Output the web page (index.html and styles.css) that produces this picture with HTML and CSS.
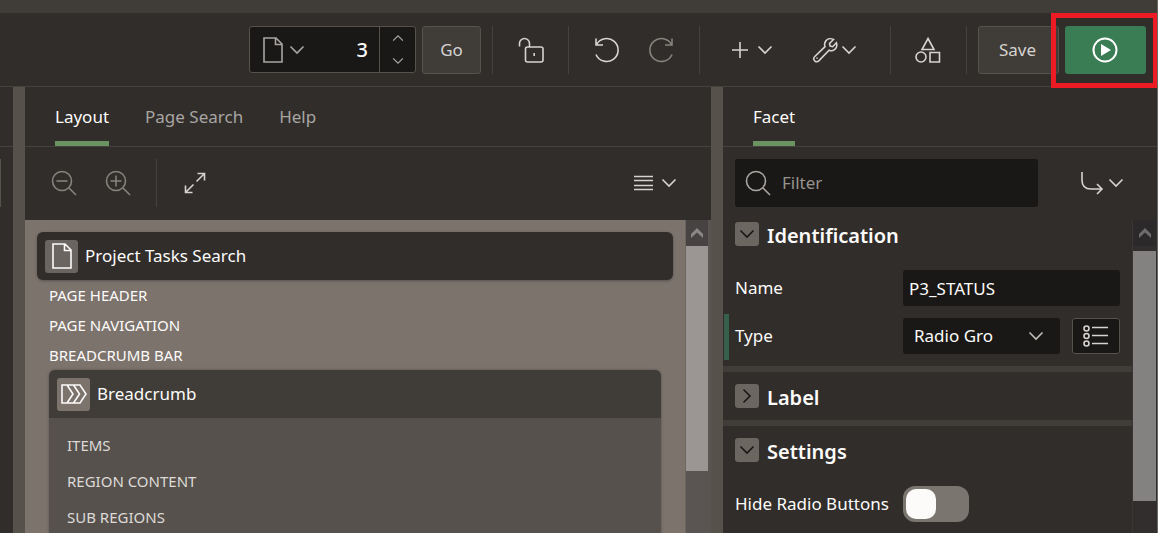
FILE: index.html
```html
<!DOCTYPE html>
<html lang="en">
<head>
    <meta charset="UTF-8">
    <title>Page Designer</title>
    <link rel="stylesheet" href="styles.css">
</head>
<body>
    <!-- shared icons -->
    <svg class="sprite" aria-hidden="true">
        <symbol id="chevron" viewBox="0 0 16 16"><path d="M1.5 4.5 8 11l6.5-6.5"/></symbol>
        <symbol id="page" viewBox="0 0 20 26"><path d="M1 1h12l6 6v18H1zM12.5 1v6.5H19"/></symbol>
        <symbol id="search" viewBox="0 0 26 26"><circle cx="11" cy="11" r="9.5"/><path d="m18 18 7 7"/></symbol>
        <symbol id="arrow-up" viewBox="0 0 12 10"><path d="M6 0 12 6v4L6 4.5 0 10V6z"/></symbol>
    </svg>

    <div class="strip"></div>

    <div class="toolbar">
        <div class="page_select">
            <button class="page_menu" aria-label="Page finder">
                <svg class="icon_page"><use href="#page"/></svg>
                <svg class="chevron"><use href="#chevron"/></svg>
            </button>
            <input type="text" class="page_number" value="3" aria-label="Page number">
            <div class="stepper">
                <button aria-label="Next page"><svg class="chevron_small up"><use href="#chevron"/></svg></button>
                <button aria-label="Previous page"><svg class="chevron_small"><use href="#chevron"/></svg></button>
            </div>
        </div>
        <button class="btn btn_go">Go</button>
        <span class="divider"></span>
        <button class="icon_btn lock" aria-label="Page unlocked">
            <svg width="26" height="26" viewBox="0 0 26 26"><path d="M1.5 9.500V6.500a5 5 0 0 1 10 0V10M9.500 10H23a2 2 0 0 1 2 2v11a2 2 0 0 1-2 2H9.500a2 2 0 0 1-2-2V12a2 2 0 0 1 2-2zM16.200 16v3"/></svg>
        </button>
        <span class="divider"></span>
        <div class="btn_pair">
            <button class="icon_btn" aria-label="Undo">
                <svg width="26" height="26" viewBox="0 0 26 26"><path d="M2 1.500V8h7M2.500 7.500A11.500 11.500 0 1 1 2 17.500"/></svg>
            </button>
            <button class="icon_btn dim" aria-label="Redo">
                <svg width="26" height="26" viewBox="0 0 26 26"><path d="M24 1.500V8h-7M23.500 7.500A11.500 11.500 0 1 0 24 17.500"/></svg>
            </button>
        </div>
        <span class="divider"></span>
        <div class="btn_pair">
            <button class="icon_btn menu" aria-label="Create">
                <svg width="18" height="16" viewBox="0 0 18 16"><path d="M9 0v16M1 8h16"/></svg>
                <svg class="chevron"><use href="#chevron"/></svg>
            </button>
            <button class="icon_btn menu utilities" aria-label="Utilities">
                <svg width="26" height="26" viewBox="0 0 26 26"><path d="M21.500 2.500 17.500 6.500l.6 2.600 2.600.6 3.700-3.900c1.200 3.400-.4 6.700-3.600 7.700-1.300.4-2.600.3-3.700-.2L7 23.600c-1.200 1.200-3.100 1.300-4.300.2-1.200-1.200-1.100-3.100.1-4.300L13 9.700c-.6-1.600-.5-3.700.6-5.400 1.700-2.700 5-3.300 7.900-1.800z"/><path d="M5 20.500v1.200"/></svg>
                <svg class="chevron"><use href="#chevron"/></svg>
            </button>
        </div>
        <span class="divider"></span>
        <button class="icon_btn shapes" aria-label="Shared components">
            <svg width="26" height="26" viewBox="0 0 26 26"><path d="M13 1.500 19 12.500H7zM15 15.500h9.500V25H15z"/><circle cx="6" cy="20" r="5"/></svg>
        </button>
        <span class="divider"></span>
        <button class="btn btn_save">Save</button>
        <div class="run_box">
            <button class="btn btn_run" aria-label="Save and run page">
                <svg width="26" height="26" viewBox="0 0 26 26"><circle cx="13" cy="13" r="11.500"/><path class="solid" d="M9 7v12l10-6z"/></svg>
            </button>
        </div>
    </div>

    <div class="main">
        <div class="side">
            <div class="tabs"></div>
            <div class="side_tools"></div>
        </div>
        <div class="splitter"></div>

        <div class="panel">
            <div class="tabs">
                <a href="#" class="tab active">Layout</a>
                <a href="#" class="tab">Page Search</a>
                <a href="#" class="tab">Help</a>
            </div>
            <div class="panel_tools">
                <button class="icon_btn dim" aria-label="Zoom out">
                    <svg width="26" height="26" viewBox="0 0 26 26"><use href="#search"/><path d="M5.500 11h11"/></svg>
                </button>
                <button class="icon_btn dim" aria-label="Zoom in">
                    <svg width="26" height="26" viewBox="0 0 26 26"><use href="#search"/><path d="M5.500 11h11M11 5.500v11"/></svg>
                </button>
                <span class="divider"></span>
                <button class="icon_btn expand" aria-label="Expand">
                    <svg width="22" height="22" viewBox="0 0 22 22"><path d="M12.500 9.500 20.500 1.500M13.500 1.500h7v7M9.500 12.500l-8 8M1.500 13.500v7h7"/></svg>
                </button>
                <button class="icon_btn menu view_menu" aria-label="View">
                    <svg width="19" height="16" viewBox="0 0 19 16"><path d="M0 1.500h19M0 5.500h19M0 10.500h19M0 14.500h19"/></svg>
                    <svg class="chevron"><use href="#chevron"/></svg>
                </button>
            </div>
            <div class="scroll_area canvas">
                <div class="canvas_content">
                    <div class="page_card">
                        <span class="card_icon"><svg class="icon_page"><use href="#page"/></svg></span>
                        Project Tasks Search
                    </div>
                    <ul class="slots">
                        <li>PAGE HEADER</li>
                        <li>PAGE NAVIGATION</li>
                        <li>BREADCRUMB BAR</li>
                    </ul>
                    <div class="region">
                        <div class="region_head">
                            <span class="card_icon">
                                <svg width="26" height="20" viewBox="0 0 26 20"><path d="M1 1h18l6 9-6 9H1zM6 1l6 9-6 9M12.500 1l6 9-6 9"/></svg>
                            </span>
                            Breadcrumb
                        </div>
                        <ul class="region_slots">
                            <li>ITEMS</li>
                            <li>REGION CONTENT</li>
                            <li>SUB REGIONS</li>
                        </ul>
                    </div>
                </div>
                <div class="scrollbar">
                    <div class="scroll_up"><svg><use href="#arrow-up"/></svg></div>
                    <div class="thumb"></div>
                </div>
            </div>
        </div>
        <div class="splitter"></div>

        <div class="panel">
            <div class="tabs">
                <a href="#" class="tab active">Facet</a>
            </div>
            <div class="panel_tools">
                <label class="filter">
                    <svg width="26" height="26" viewBox="0 0 26 26"><use href="#search"/></svg>
                    <input type="text" placeholder="Filter" aria-label="Filter">
                </label>
                <button class="icon_btn menu goto_menu" aria-label="Go to group">
                    <svg width="24" height="24" viewBox="0 0 24 24"><path d="M2 1v8q0 9 9 9h11M17 13l5 5-5 5"/></svg>
                    <svg class="chevron"><use href="#chevron"/></svg>
                </button>
            </div>
            <div class="scroll_area">
                <div class="props">
                    <div class="group">
                        <div class="group_head">
                            <button class="toggle" aria-label="Collapse"><svg class="chevron"><use href="#chevron"/></svg></button>
                            <h3>Identification</h3>
                        </div>
                        <div class="field">
                            <label for="name">Name</label>
                            <input type="text" id="name" value="P3_STATUS">
                        </div>
                        <div class="field changed">
                            <label for="type">Type</label>
                            <div class="select_box">
                                <select id="type">
                                    <option>Radio Gro</option>
                                </select>
                                <svg class="chevron"><use href="#chevron"/></svg>
                            </div>
                            <button class="lov" aria-label="Pick type">
                                <svg width="26" height="22" viewBox="0 0 26 22"><path d="M9 2.500h16M9 10.500h16M9 18.500h16"/><circle cx="3.500" cy="3.500" r="2.500"/><circle cx="3.500" cy="11" r="2.500"/><circle cx="3.500" cy="18.500" r="2.500"/></svg>
                            </button>
                        </div>
                    </div>
                    <div class="group">
                        <div class="group_head">
                            <button class="toggle" aria-label="Expand"><svg class="chevron right"><use href="#chevron"/></svg></button>
                            <h3>Label</h3>
                        </div>
                    </div>
                    <div class="group">
                        <div class="group_head">
                            <button class="toggle" aria-label="Collapse"><svg class="chevron"><use href="#chevron"/></svg></button>
                            <h3>Settings</h3>
                        </div>
                        <div class="field">
                            <label for="hide">Hide Radio Buttons</label>
                            <input type="checkbox" id="hide" class="switch">
                        </div>
                    </div>
                </div>
                <div class="scrollbar dark">
                    <div class="scroll_up"><svg><use href="#arrow-up"/></svg></div>
                    <div class="thumb"></div>
                </div>
            </div>
        </div>
    </div>
</body>
</html>
```
FILE: styles.css
```css
* {
    margin: 0;
    padding: 0;
    box-sizing: border-box;
}

body {
    display: flex;
    flex-direction: column;
    height: 100vh;
    overflow: hidden;
    border-right: 1px solid #6b6864;
    background-color: #312d2a;
    color: #fcfbfa;
    font: 17px/24px "Noto Sans", "Open Sans", sans-serif;
}

button, input, select {
    border: none;
    background: none;
    color: inherit;
    font: inherit;
}

ul {
    list-style: none;
}

a {
    color: inherit;
    text-decoration: none;
}

svg {
    flex: none;
    fill: none;
    stroke: currentColor;
    stroke-width: 1.6;
}

.solid {
    fill: currentColor;
    stroke: none;
}

.sprite {
    position: absolute;
    width: 0;
    height: 0;
}

.chevron {
    width: 16px;
    height: 16px;
}

.chevron.right {
    transform: rotate(-90deg);
}

.chevron_small {
    width: 12px;
    height: 12px;
}

.up {
    transform: rotate(180deg);
}

.icon_page {
    width: 20px;
    height: 26px;
}

/* top bar */
.strip {
    flex: none;
    height: 13px;
    background-color: #403c38;
}

.toolbar {
    display: flex;
    flex: none;
    align-items: center;
    justify-content: flex-end;
    height: 74px;
    padding-right: 11px;
    border-bottom: 1px solid #45413c;
}

.divider {
    width: 1px;
    height: 48px;
    background-color: #45413c;
}

.page_select {
    display: flex;
    width: 167px;
    height: 47px;
    margin-right: 6px;
    border: 1px solid #56514b;
    border-radius: 3px;
    background-color: #1a1816;
}

.page_menu {
    display: flex;
    align-items: center;
    gap: 6px;
    padding-left: 13px;
    color: #a8a5a2;
}

.page_number {
    flex: 1;
    min-width: 0;
    padding-right: 11px;
    font-size: 20px;
    font-weight: 500;
    text-align: right;
}

.stepper {
    display: flex;
    flex-direction: column;
    width: 36px;
    border-left: 1px solid #56514b;
    color: #a8a5a2;
}

.stepper button {
    display: flex;
    flex: 1;
    align-items: center;
    justify-content: center;
}

.btn {
    height: 48px;
    border: 1px solid #56514b;
    border-radius: 3px;
    background-color: #403c38;
    color: #d6d3d1;
}

.btn_go {
    width: 59px;
    margin-right: 11px;
}

.btn_save {
    width: 81px;
    margin: 0 6px 0 11px;
    padding-right: 2px;
}

.btn_run {
    display: flex;
    align-items: center;
    justify-content: center;
    width: 81px;
    padding-right: 2px;
    border: none;
    background-color: #3a7d55;
    color: #fff;
}

.btn_run svg {
    stroke-width: 2;
}

.run_box {
    position: relative;
}

/* highlight frame around the run button */
.run_box::after {
    content: "";
    position: absolute;
    inset: -13px -12px -14px -14px;
    border: 5px solid #ed1c24;
    pointer-events: none;
}

.icon_btn {
    display: flex;
    align-items: center;
    justify-content: center;
    width: 54px;
    height: 48px;
    color: #d6d3d1;
}

.icon_btn.dim {
    color: #86827e;
}

.lock, .shapes {
    width: 75px;
}

.shapes {
    padding-right: 2px;
}

.btn_pair {
    display: flex;
    padding: 0 11px;
}

.icon_btn.menu {
    gap: 8px;
    width: 82px;
}

.icon_btn.utilities {
    gap: 3px;
    width: 86px;
    padding-right: 4px;
}

/* panels */
.main {
    display: grid;
    flex: 1;
    grid-template-columns: 13px 12px 686fr 12px 434fr;
    min-height: 0;
}

.splitter {
    background-color: #56514b;
}

.side_tools {
    height: 48px;
    margin-top: 12px;
    border-left: 1px solid #56514b;
}

.panel {
    display: flex;
    flex-direction: column;
    min-width: 0;
    min-height: 0;
}

.tabs {
    display: flex;
    flex: none;
    gap: 36px;
    height: 60px;
    padding-left: 30px;
    border-bottom: 1px solid #45413c;
}

.tab {
    padding-top: 18px;
    border-bottom: 5px solid transparent;
    color: #a8a5a2;
}

.tab.active {
    border-color: #6b9362;
    color: #fcfbfa;
}

.panel_tools {
    display: flex;
    flex: none;
    align-items: center;
    height: 73px;
    padding: 0 12px 1px;
}

.panel_tools .divider {
    margin: 0 11px;
}

.panel_tools .view_menu {
    margin-left: auto;
    margin-right: 3px;
}

.filter {
    display: flex;
    flex: 1;
    align-items: center;
    gap: 11px;
    min-width: 0;
    height: 48px;
    padding-left: 10px;
    border-radius: 3px;
    background-color: #1a1816;
    color: #a8a5a2;
}

.filter input {
    flex: 1;
    min-width: 0;
}

.filter input::placeholder {
    color: #96938f;
}

.panel_tools .goto_menu {
    gap: 4px;
    margin-left: 25px;
    padding-right: 4px;
}

.scroll_area {
    display: flex;
    flex: 1;
    min-height: 0;
}

.scrollbar {
    display: flex;
    flex: none;
    flex-direction: column;
    width: 26px;
    padding-right: 3px;
    border-left: 1px solid #6b6560;
    background-color: #5a5552;
}

.scroll_up {
    display: flex;
    flex: none;
    align-items: center;
    justify-content: center;
    height: 26px;
    background-color: #464342;
    color: #8a8785;
}

.scroll_up svg {
    width: 12px;
    height: 10px;
    fill: currentColor;
    stroke: none;
}

.thumb {
    flex: none;
    height: 72%;
    background-color: #9b9693;
}

.scrollbar.dark {
    gap: 5px;
    width: 25px;
    padding-right: 1px;
    border-color: #3a3635;
    background-color: #322e2d;
}

.dark .scroll_up {
    background-color: #2b2929;
    color: #6e6c6c;
}

.dark .thumb {
    height: 80%;
    background-color: #848181;
}

/* layout canvas */
.canvas {
    background-color: #7c736d;
}

.canvas_content {
    display: flex;
    flex: 1;
    flex-direction: column;
    min-width: 0;
    padding: 12px 12px 0;
    overflow: hidden;
}

.page_card, .region_head {
    display: flex;
    flex: none;
    align-items: center;
    gap: 7px;
    height: 48px;
    padding-left: 8px;
}

.page_card {
    border-radius: 6px;
    background-color: #312d2a;
    box-shadow: 0 1px 3px rgba(0, 0, 0, .3);
}

.card_icon {
    display: flex;
    align-items: center;
    justify-content: center;
    width: 33px;
    height: 33px;
    border-radius: 3px;
    background-color: #6b6561;
}

.region_head .card_icon {
    background-color: #7c736d;
}

.slots, .region_slots {
    font-size: 15px;
}

.slots li {
    padding: 3px 12px;
}

.region {
    flex: 1;
    min-height: 0;
    margin: 0 12px;
    border-radius: 6px 6px 0 0;
    background-color: #56514c;
    box-shadow: 0 0 3px rgba(0, 0, 0, .3);
}

.region_head {
    border-radius: 6px 6px 0 0;
    background-color: #403c37;
}

.region_slots {
    padding: 9px 18px 0;
    color: #dddad8;
    line-height: 36px;
}

/* properties */
.props {
    flex: 1;
    min-width: 0;
    overflow: hidden;
}

.group {
    padding: 12px;
    border-bottom: 6px solid #403c38;
}

.group:first-child {
    padding-top: 2px;
}

.group:last-child {
    border-bottom: none;
    padding-bottom: 0;
}

.group_head {
    display: flex;
    align-items: center;
    gap: 8px;
    height: 24px;
}

.group_head h3 {
    padding-top: 3px;
    font-size: 20px;
    font-weight: 600;
}

.toggle {
    display: flex;
    align-items: center;
    justify-content: center;
    width: 24px;
    height: 24px;
    border-radius: 3px;
    background-color: #6b6660;
    color: #1a1816;
}

.field {
    display: flex;
    align-items: center;
    gap: 12px;
    margin-top: 12px;
}

.group_head + .field {
    margin-top: 24px;
}

.field label {
    flex: none;
    width: 156px;
    white-space: nowrap;
}

.field input[type="text"], .select_box {
    flex: 1;
    min-width: 0;
    height: 36px;
    border-radius: 3px;
    background-color: #1a1816;
}

.field input[type="text"] {
    padding-left: 6px;
}

/* modified property marker */
.field.changed {
    margin: 8px 0 -6px -11px;
    padding: 4px 0 6px 6px;
    border-left: 5px solid #37604a;
}

.select_box {
    display: flex;
    align-items: center;
    padding-right: 16px;
}

.select_box select {
    flex: 1;
    min-width: 0;
    height: 36px;
    padding-left: 11px;
    appearance: none;
}

.select_box .chevron {
    color: #c0bdba;
}

.lov {
    display: flex;
    align-items: center;
    justify-content: center;
    width: 48px;
    height: 36px;
    border: 1px solid #56514b;
    border-radius: 3px;
    background-color: #1a1816;
    color: #d6d3d1;
}

.switch {
    width: 66px;
    height: 36px;
    padding: 3px;
    border-radius: 12px;
    background-color: #7a756f;
    appearance: none;
}

.switch::before {
    content: "";
    display: block;
    width: 30px;
    height: 30px;
    border-radius: 10px;
    background-color: #fcfbfa;
}

.switch:checked::before {
    margin-left: auto;
}
```
